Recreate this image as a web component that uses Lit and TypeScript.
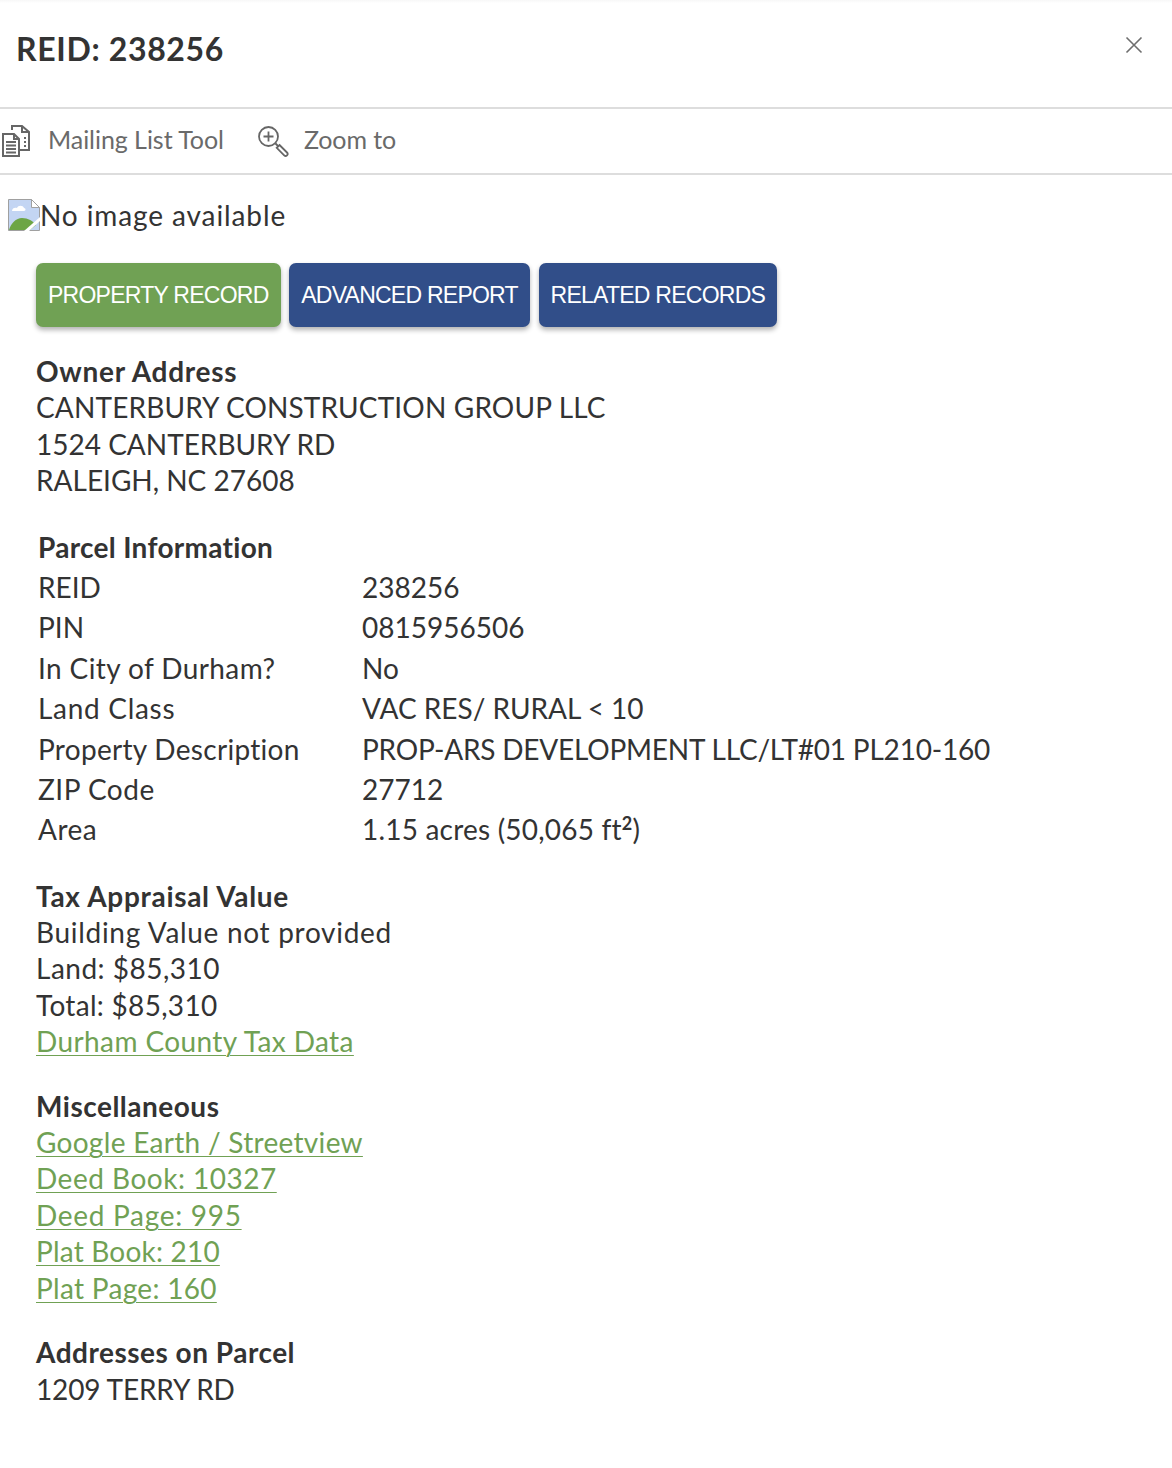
import { LitElement, html, css } from "lit";
import { customElement } from "lit/decorators.js";

// [label, label spacing class, value, value spacing class]
const PARCEL = [
  ["REID", "", "238256", ""],
  ["PIN", "", "0815956506", ""],
  ["In City of Durham?", "ls3", "No", ""],
  ["Land Class", "ls5", "VAC RES/ RURAL < 10", ""],
  ["Property Description", "ls2", "PROP-ARS DEVELOPMENT LLC/LT#01 PL210-160", "lsn"],
  ["ZIP Code", "ls4", "27712", ""],
];

const MISC = [
  ["Google Earth / Streetview", "ls2"],
  ["Deed Book: 10327", "ls4"],
  ["Deed Page: 995", "ls5"],
  ["Plat Book: 210", "ls1"],
  ["Plat Page: 160", "ls2"],
];

@customElement("app-root")
export class AppRoot extends LitElement {
  static styles = css`
    :host {
      display: block;
      width: 1172px;
      height: 1468px;
      overflow: hidden;
      background: #fff;
      color: #333;
      font-family: "Lato", "Noto Sans", sans-serif;
      font-size: 28px;
      line-height: 36.4px;
    }
    .lsn {
      letter-spacing: -0.2px;
    }
    .ls0 {
      letter-spacing: 0.15px;
    }
    .ls1 {
      letter-spacing: 0.2px;
    }
    .ls2 {
      letter-spacing: 0.3px;
    }
    .ls3 {
      letter-spacing: 0.4px;
    }
    .ls4 {
      letter-spacing: 0.5px;
    }
    .ls5 {
      letter-spacing: 0.7px;
    }
    .header {
      height: 109px;
      box-sizing: border-box;
      display: flex;
      justify-content: space-between;
      padding: 30px 28px 0 16px;
      border-bottom: 2px solid #ddd;
      background: linear-gradient(#f7f7f7, #fff 3px);
    }
    .title {
      font-size: 32px;
      font-weight: 700;
      line-height: 38px;
      letter-spacing: 0.65px;
    }
    .close {
      width: 20px;
      height: 20px;
      margin-top: 5px;
    }
    .toolbar {
      height: 66px;
      box-sizing: border-box;
      display: flex;
      align-items: center;
      padding: 0 0 0 2px;
      border-bottom: 2px solid #ddd;
      color: #6a6a6a;
      font-size: 25px;
    }
    .tool {
      display: flex;
      align-items: center;
    }
    .tool svg {
      flex: none;
    }
    .tool span {
      padding-bottom: 4px;
    }
    .mail {
      margin-right: 34px;
    }
    .mail span {
      letter-spacing: -0.05px;
    }
    .mail svg {
      margin-right: 18px;
    }
    .zoom svg {
      margin-right: 15px;
    }
    .zoom span {
      letter-spacing: -0.1px;
    }
    .noimage {
      display: flex;
      align-items: center;
      height: 36px;
      margin: 22px 0 0 8px;
      letter-spacing: 0.9px;
    }
    .buttons {
      display: flex;
      gap: 8.7px;
      margin: 30px 0 0 36px;
    }
    .btn {
      height: 64px;
      box-sizing: border-box;
      padding: 0 12px;
      display: flex;
      align-items: center;
      border-radius: 7px;
      background: #314e89;
      color: #fff;
      font-family: "Liberation Sans", Arial, sans-serif;
      font-size: 23px;
      letter-spacing: -0.75px;
      box-shadow: 0 3px 5px rgba(0, 0, 0, 0.3);
    }
    .btn.active {
      background: #70a154;
    }
    .block {
      margin-left: 36px;
    }
    .owner {
      margin-top: 26px;
    }
    h3 {
      margin: 0;
      font-size: 28px;
      font-weight: 700;
    }
    .parcel {
      margin: 30px 0 0 38px;
    }
    .row {
      display: grid;
      grid-template-columns: 324px 1fr;
      height: 40.4px;
      line-height: 40.4px;
    }
    .parcel h3 {
      height: 36.4px;
      line-height: 36px;
      margin-bottom: 2px;
    }
    sup {
      font-size: 18px;
      line-height: 0;
      font-weight: 700;
    }
    .tax {
      margin-top: 27.9px;
    }
    .misc {
      margin-top: 28px;
    }
    .addresses {
      margin-top: 28px;
    }
    a {
      display: block;
      width: fit-content;
      color: #70a154;
      text-decoration: underline;
      text-underline-offset: 3px;
      text-decoration-thickness: 1px;
    }
    .tight {
      letter-spacing: -0.15px;
    }
  `;

  render() {
    return html`
      <div class="header">
        <div class="title">REID: 238256</div>
        <svg class="close" viewBox="0 0 20 20" fill="none" stroke="#6e6e6e" stroke-width="1.6">
          <path d="M2.5 2.5l15 15M17.5 2.5l-15 15" />
        </svg>
      </div>
      <div class="toolbar">
        <div class="tool mail">
          <svg width="28" height="32" viewBox="0 0 28 32" fill="none" stroke="#666" stroke-width="2">
            <path d="M1 9h11l5 5v17H1z" fill="#fff" />
            <path d="M12 9v5h5M4 17h10M4 20.5h10M4 24h10M4 27.5h10" />
            <path d="M10 5V1h10l7 6v18h-9" />
            <path d="M20 1v6h7M22 13h2M22 17h2M22 21h2" />
          </svg>
          <span>Mailing List Tool</span>
        </div>
        <div class="tool zoom">
          <svg width="31" height="31" viewBox="0 0 31 31" fill="none" stroke="#666" stroke-width="1.8">
            <circle cx="10.5" cy="10.5" r="9.5" />
            <path d="M10.5 5.500v10M5.500 10.500h10M17.500 17.500l3 3" />
            <path d="M21.500 19l7.500 7.500a1.900 1.900 0 0 1-2.800 2.800l-7.500-7.500z" />
          </svg>
          <span>Zoom to</span>
        </div>
      </div>
      <div class="noimage">
        <svg width="32" height="32" viewBox="0 0 32 32">
          <path d="M0.5 0.5h23l8 8v23h-31z" fill="#c3d5f3" stroke="#a0a0a0" />
          <path d="M23.5 0.5v8h8z" fill="#fff" stroke="#a0a0a0" />
          <path d="M4 12c0-3 3-4 5-3 1-3 6-3 7 0 2 0 2 3 0 3z" fill="#fff" />
          <path d="M1 31c2-7 7-12 13-12 6 0 11 3 14 7l-6 5z" fill="#6da545" />
          <path d="M16 32L32 18v4L21 32z" fill="#fff" />
        </svg>
        <span>No image available</span>
      </div>
      <div class="buttons">
        <div class="btn active">PROPERTY RECORD</div>
        <div class="btn">ADVANCED REPORT</div>
        <div class="btn">RELATED RECORDS</div>
      </div>
      <div class="block owner">
        <h3 class="ls5">Owner Address</h3>
        <span class="ls0">CANTERBURY CONSTRUCTION GROUP LLC</span><br />
        1524 CANTERBURY RD<br />
        RALEIGH, NC 27608
      </div>
      <div class="parcel">
        <h3 class="ls2">Parcel Information</h3>
        ${PARCEL.map(
          ([k, kc, v, vc]) =>
            html`<div class="row"><span class=${kc}>${k}</span><span class=${vc}>${v}</span></div>`
        )}
        <div class="row">
          <span class="ls4">Area</span><span class="ls1">1.15 acres (50,065 ft<sup>2</sup>)</span>
        </div>
      </div>
      <div class="block tax">
        <h3 class="ls5">Tax Appraisal Value</h3>
        <span class="ls5">Building Value not provided</span><br />
        <span class="ls4">Land: $85,310</span><br />
        <span class="ls2">Total: $85,310</span>
        <a class="ls3">Durham County Tax Data</a>
      </div>
      <div class="block misc">
        <h3 class="ls4">Miscellaneous</h3>
        ${MISC.map(([m, c]) => html`<a class=${c}>${m}</a>`)}
      </div>
      <div class="block addresses">
        <h3 class="ls4">Addresses on Parcel</h3>
        <span class="tight">1209 TERRY RD</span>
      </div>
    `;
  }
}
